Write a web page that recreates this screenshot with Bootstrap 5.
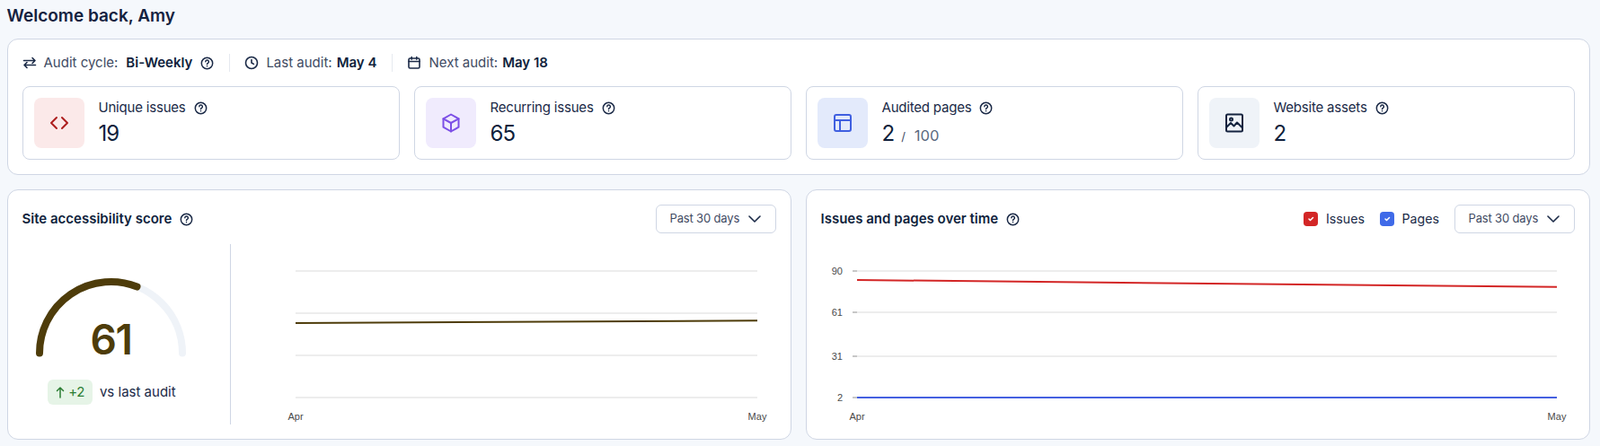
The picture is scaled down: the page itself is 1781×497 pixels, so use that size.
<!DOCTYPE html>
<html lang="en">
<head>
<meta charset="utf-8">
<title>Dashboard</title>
<link href="https://cdn.jsdelivr.net/npm/bootstrap@5.3.0/dist/css/bootstrap.min.css" rel="stylesheet">
<style>
html,body{height:100%;overflow:hidden}
body{background:#f5f8fc;color:#101f3c;font-family:Inter,"Liberation Sans",sans-serif;font-size:15px}
.dash{padding:0 11.5px 0 7.5px}
.welcome{font-family:Inter,sans-serif;font-size:19px;font-weight:600;line-height:26px;margin:0;padding:5px 0 12px;color:#142240}
.panel{border:1px solid #cfd6e4;border-radius:12px;background:#fff}
.panel>.card-body{padding:16px}
.meta-line{height:20px;color:#3f4b63}
.meta-line b{font-weight:600;color:#101f3c;margin-left:5px}
.meta-line b.wide-gap{margin-left:9px}
.meta-sep{width:1px;height:20px;background:#e6e9ef;margin:0 16.5px}
.ico{width:16px;height:16px;flex:none;fill:none;stroke:#1b2a47;stroke-width:1.6;stroke-linecap:round;stroke-linejoin:round}
.help{width:15px;height:15px;margin-left:9px;flex:none;fill:none;stroke:#1b2a47;stroke-width:1.6;stroke-linecap:round;stroke-linejoin:round}
.stat-tile{border:1px solid #cfd6e4;border-radius:8px;padding:12px;gap:16px;background:#fff}
.tile-icon{width:56px;height:56px;border-radius:8px}
.tile-icon svg{width:24px;height:24px;fill:none;stroke-width:2;stroke-linecap:round;stroke-linejoin:round}
.tone-red{background:#fbe9e9}.tone-red svg{stroke:#ad1f1f}
.tone-purple{background:#f0ebfd}.tone-purple svg{stroke:#7c4fe6}
.tone-blue{background:#e3eafb}.tone-blue svg{stroke:#3f5fe0}
.tone-slate{background:#eff3f8}.tone-slate svg{stroke:#14233f}
.tile-label{line-height:20px;font-size:15px;letter-spacing:-.2px;color:#1b2a47;margin-top:1px}
.tile-value{font-size:24px;line-height:30px;margin-top:4px;letter-spacing:-1px;color:#101f3c}
.tile-sub{font-size:16.5px;line-height:1;letter-spacing:0;color:#5a6a80;margin-left:8px}
.tile-sub i{font-style:normal;font-size:13px;line-height:1;margin-right:10px;color:#3f4b63}
.card-head{height:32px}
.card-title-txt{font-weight:600;font-size:15px;color:#101f3c}
.range-btn{width:134px;height:32px;padding:0 16px 0 15px;border:1px solid #cfd6e4;border-radius:6px;background:#fff;color:#3f4b63;font-size:13px;letter-spacing:-.15px}
.range-btn svg{width:14px;height:14px;fill:none;stroke:#1b2a47;stroke-width:1.6;stroke-linecap:round;stroke-linejoin:round}
.card-body-area{height:201px;margin-top:12px}
.gauge-col{width:232px;flex:none;border-right:1px solid #cfd6e4;padding:33px 33px 0 0}
.gauge-foot{margin:18px 0 0 2px}
.delta{height:28px;padding:0 9px;gap:4px;background:#e6f4e7;color:#2b7d33;border-radius:6px;font-size:15px;letter-spacing:-.5px}
.delta svg{width:10px;height:14px;fill:none;stroke:#2b7d33;stroke-width:1.5;stroke-linecap:round;stroke-linejoin:round}
.delta-note{font-size:15px;color:#1b2a47}
.legend-box{width:16px;height:16px;border-radius:4px;margin:0;border:0;background-size:10px;opacity:1}
.legend-box.is-red,.legend-box.is-red:checked{background-color:#d32626}
.legend-box.is-blue,.legend-box.is-blue:checked{background-color:#3f6ae8}
.legend-lbl{font-size:14.2px;color:#1b2a47;margin:0 16.5px 0 9px}
.chart-axis{font-family:"Liberation Sans",Arial,sans-serif;font-size:11px;fill:#4a4a4a}
.grid-line{stroke:#ededed;stroke-width:1.8}
</style>
</head>
<body>
<main class="dash">
  <h1 class="welcome">Welcome back, Amy</h1>

  <section class="card panel">
    <div class="card-body">
      <div class="meta-line d-flex align-items-center mb-3">
        <svg class="ico me-2" viewBox="0 0 16 16"><path d="M1.5 5.5h12.5M11 2.5l3 3-3 3"/><path d="M14.5 10.5H2M5 7.5l-3 3 3 3"/></svg>
        <span>Audit cycle:</span><b class="wide-gap">Bi-Weekly</b>
        <svg class="help" viewBox="0 0 16 16"><circle cx="8" cy="8" r="6.6"/><path d="M6.2 6.2a1.9 1.9 0 1 1 2.8 1.7c-.6.3-1 .7-1 1.4"/><path d="M8 11.4v.1"/></svg>
        <span class="meta-sep"></span>
        <svg class="ico me-2" viewBox="0 0 16 16"><circle cx="8" cy="8" r="6.5"/><path d="M8 4.5V8l2.4 1.4"/></svg>
        <span>Last audit:</span><b>May 4</b>
        <span class="meta-sep"></span>
        <svg class="ico me-2" viewBox="0 0 16 16"><rect x="2" y="3" width="12" height="11" rx="1.5"/><path d="M2 6.5h12M5.2 1.5v2.6M10.8 1.5v2.6"/></svg>
        <span>Next audit:</span><b>May 18</b>
      </div>
      <div class="row g-3">
        <div class="col-3"><div class="stat-tile d-flex">
          <div class="tile-icon tone-red d-flex align-items-center justify-content-center"><svg viewBox="0 0 24 24"><path d="M9 6l-6 6 6 6M15 6l6 6-6 6"/></svg></div>
          <div><div class="tile-label d-flex align-items-center">Unique issues<svg class="help" viewBox="0 0 16 16"><circle cx="8" cy="8" r="6.6"/><path d="M6.2 6.2a1.9 1.9 0 1 1 2.8 1.7c-.6.3-1 .7-1 1.4"/><path d="M8 11.4v.1"/></svg></div><div class="tile-value">19</div></div>
        </div></div>
        <div class="col-3"><div class="stat-tile d-flex">
          <div class="tile-icon tone-purple d-flex align-items-center justify-content-center"><svg viewBox="0 0 24 24"><path d="M12 2.5l8.5 4.8v9.4L12 21.5l-8.5-4.8V7.3z"/><path d="M3.5 7.3L12 12l8.5-4.7M12 12v9.5"/></svg></div>
          <div><div class="tile-label d-flex align-items-center">Recurring issues<svg class="help" viewBox="0 0 16 16"><circle cx="8" cy="8" r="6.6"/><path d="M6.2 6.2a1.9 1.9 0 1 1 2.8 1.7c-.6.3-1 .7-1 1.4"/><path d="M8 11.4v.1"/></svg></div><div class="tile-value">65</div></div>
        </div></div>
        <div class="col-3"><div class="stat-tile d-flex">
          <div class="tile-icon tone-blue d-flex align-items-center justify-content-center"><svg viewBox="0 0 24 24"><rect x="3" y="3" width="18" height="18" rx="2"/><path d="M3 9h18M9 9v12"/></svg></div>
          <div><div class="tile-label d-flex align-items-center">Audited pages<svg class="help" viewBox="0 0 16 16"><circle cx="8" cy="8" r="6.6"/><path d="M6.2 6.2a1.9 1.9 0 1 1 2.8 1.7c-.6.3-1 .7-1 1.4"/><path d="M8 11.4v.1"/></svg></div><div class="tile-value">2<span class="tile-sub"><i>/</i>100</span></div></div>
        </div></div>
        <div class="col-3"><div class="stat-tile d-flex">
          <div class="tile-icon tone-slate d-flex align-items-center justify-content-center"><svg viewBox="0 0 24 24"><rect x="3" y="2.5" width="18" height="19" rx="1.5"/><circle cx="8.5" cy="8" r="1.5"/><path d="M3 17l5-5 3.5 3.5 3.5-4 6 6"/></svg></div>
          <div><div class="tile-label d-flex align-items-center">Website assets<svg class="help" viewBox="0 0 16 16"><circle cx="8" cy="8" r="6.6"/><path d="M6.2 6.2a1.9 1.9 0 1 1 2.8 1.7c-.6.3-1 .7-1 1.4"/><path d="M8 11.4v.1"/></svg></div><div class="tile-value">2</div></div>
        </div></div>
      </div>
    </div>
  </section>

  <div class="row g-3 pt-3">
    <div class="col-6">
      <section class="card panel"><div class="card-body">
        <div class="card-head d-flex align-items-center">
          <span class="card-title-txt">Site accessibility score</span>
          <svg class="help" viewBox="0 0 16 16"><circle cx="8" cy="8" r="6.6"/><path d="M6.2 6.2a1.9 1.9 0 1 1 2.8 1.7c-.6.3-1 .7-1 1.4"/><path d="M8 11.4v.1"/></svg>
          <button type="button" class="btn range-btn d-flex align-items-center justify-content-between ms-auto">Past 30 days<svg viewBox="0 0 14 14"><path d="M1 4l6 6 6-6"/></svg></button>
        </div>
        <div class="card-body-area d-flex">
          <div class="gauge-col d-flex flex-column align-items-center">
            <svg width="175" height="100" viewBox="0 0 175 100" role="img" aria-label="Score 61">
              <path d="M8 88.5a79.5 79.5 0 0 1 159 0" fill="none" stroke="#eff3f8" stroke-width="8" stroke-linecap="round"/>
              <path d="M8 88.5a79.5 79.5 0 0 1 108.5-74" fill="none" stroke="#4e3c0a" stroke-width="8" stroke-linecap="round"/>
              <text x="87.5" y="90" text-anchor="middle" font-family="Inter,sans-serif" font-size="46" font-weight="600" letter-spacing="-1.5" fill="#4e3c0a">61</text>
            </svg>
            <div class="d-flex align-items-center gap-2 gauge-foot">
              <span class="delta d-flex align-items-center"><svg viewBox="0 0 10 14"><path d="M5 13V2M1.5 5.5L5 2l3.5 3.5"/></svg>+2</span><span class="delta-note">vs last audit</span>
            </div>
          </div>
          <svg class="flex-grow-1" width="607" height="201" viewBox="0 0 607 201">
            <line class="grid-line" x1="72" x2="586" y1="30" y2="30"/>
            <line class="grid-line" x1="72" x2="586" y1="77" y2="77"/>
            <line class="grid-line" x1="72" x2="586" y1="124" y2="124"/>
            <line class="grid-line" x1="72" x2="586" y1="171" y2="171"/>
            <line x1="72" x2="586" y1="88" y2="85.2" stroke="#4e3c0a" stroke-width="2"/>
            <text class="chart-axis" x="72" y="196" text-anchor="middle">Apr</text>
            <text class="chart-axis" x="586" y="196" text-anchor="middle">May</text>
          </svg>
        </div>
      </div></section>
    </div>
    <div class="col-6">
      <section class="card panel"><div class="card-body">
        <div class="card-head d-flex align-items-center">
          <span class="card-title-txt">Issues and pages over time</span>
          <svg class="help" viewBox="0 0 16 16"><circle cx="8" cy="8" r="6.6"/><path d="M6.2 6.2a1.9 1.9 0 1 1 2.8 1.7c-.6.3-1 .7-1 1.4"/><path d="M8 11.4v.1"/></svg>
          <div class="d-flex align-items-center ms-auto">
            <input class="form-check-input legend-box is-red" type="checkbox" checked aria-label="Issues"><span class="legend-lbl">Issues</span>
            <input class="form-check-input legend-box is-blue" type="checkbox" checked aria-label="Pages"><span class="legend-lbl">Pages</span>
            <button type="button" class="btn range-btn d-flex align-items-center justify-content-between">Past 30 days<svg viewBox="0 0 14 14"><path d="M1 4l6 6 6-6"/></svg></button>
          </div>
        </div>
        <div class="card-body-area">
          <svg class="d-block" width="839" height="201" viewBox="0 0 839 201">
            <g stroke="#b5b5b5" stroke-width="1.5"><line x1="35" x2="40" y1="30" y2="30"/><line x1="35" x2="40" y1="76" y2="76"/><line x1="35" x2="40" y1="125" y2="125"/><line x1="35" x2="40" y1="171" y2="171"/></g>
            <line class="grid-line" x1="40" x2="819" y1="30" y2="30"/>
            <line class="grid-line" x1="40" x2="819" y1="76" y2="76"/>
            <line class="grid-line" x1="40" x2="819" y1="125" y2="125"/>
            <line class="grid-line" x1="40" x2="819" y1="171" y2="171"/>
            <line x1="40" x2="819" y1="40" y2="47.8" stroke="#d32626" stroke-width="2"/>
            <line x1="40" x2="819" y1="171" y2="171" stroke="#4560e0" stroke-width="2"/>
            <g class="chart-axis" text-anchor="end"><text x="24" y="34">90</text><text x="24" y="80">61</text><text x="24" y="129">31</text><text x="24" y="175">2</text></g>
            <text class="chart-axis" x="40" y="196" text-anchor="middle">Apr</text>
            <text class="chart-axis" x="819" y="196" text-anchor="middle">May</text>
          </svg>
        </div>
      </div></section>
    </div>
  </div>
</main>
</body>
</html>
